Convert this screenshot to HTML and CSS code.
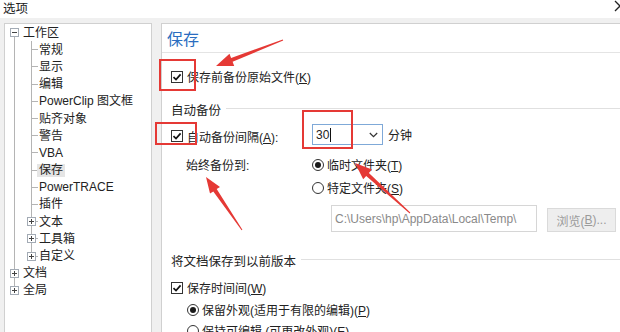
FILE: index.html
```html
<!DOCTYPE html>
<html lang="zh-CN">
<head>
<meta charset="utf-8">
<title>选项</title>
<link rel="stylesheet" href="styles.css">
</head>
<body>
<div class="win">
  <div class="titlebar">
    <span class="title">选项</span>
    <svg class="close" width="12" height="12" viewBox="0 0 12 12"><path d="M1 1 L11 11 M11 1 L1 11" stroke="#222" stroke-width="1.3" fill="none"/></svg>
  </div>
  <div class="body">
    <div class="tree-panel">
      <div class="tree">
        <div class="grp">
          <div class="row top"><span class="exp minus"></span><span class="lbl">工作区</span></div>
          <div class="kids">
            <div class="row kid"><span class="conn"></span><span class="lbl">常规</span></div>
            <div class="row kid"><span class="conn"></span><span class="lbl">显示</span></div>
            <div class="row kid"><span class="conn"></span><span class="lbl">编辑</span></div>
            <div class="row kid"><span class="conn"></span><span class="lbl">PowerClip 图文框</span></div>
            <div class="row kid"><span class="conn"></span><span class="lbl">贴齐对象</span></div>
            <div class="row kid"><span class="conn"></span><span class="lbl">警告</span></div>
            <div class="row kid"><span class="conn"></span><span class="lbl">VBA</span></div>
            <div class="row kid sel"><span class="conn"></span><span class="lbl">保存</span></div>
            <div class="row kid"><span class="conn"></span><span class="lbl">PowerTRACE</span></div>
            <div class="row kid"><span class="conn"></span><span class="lbl">插件</span></div>
            <div class="row kid xkid"><span class="exp plus"></span><span class="conn short"></span><span class="lbl">文本</span></div>
            <div class="row kid xkid"><span class="exp plus"></span><span class="conn short"></span><span class="lbl">工具箱</span></div>
            <div class="row kid xkid"><span class="exp plus"></span><span class="conn short"></span><span class="lbl">自定义</span></div>
          </div>
        </div>
        <div class="row top"><span class="exp plus"></span><span class="lbl">文档</span></div>
        <div class="row top"><span class="exp plus"></span><span class="lbl">全局</span></div>
      </div>
    </div>

    <div class="page">
      <div class="page-head">保存</div>
      <div class="page-body">
        <div class="line cb-row first">
          <span class="cb"><svg width="10" height="10" viewBox="0 0 10 10"><path d="M1.5 5.2 L4 7.6 L8.6 2.4" stroke="#111" stroke-width="1.7" fill="none"/></svg></span>
          <span>保存前备份原始文件(<u>K</u>)</span>
        </div>

        <div class="section s1"><span class="sec-lbl">自动备份</span></div>

        <div class="auto">
          <div class="arow a1">
            <div class="cell">
              <span class="cb"><svg width="10" height="10" viewBox="0 0 10 10"><path d="M1.5 5.2 L4 7.6 L8.6 2.4" stroke="#111" stroke-width="1.7" fill="none"/></svg></span>
              <span>自动备份间隔(<u>A</u>):</span>
            </div>
            <div class="combo"><span class="combo-val">30<span class="caret"></span></span><svg width="9" height="6" viewBox="0 0 9 6"><path d="M0.8 1 L4.5 4.6 L8.2 1" stroke="#333" stroke-width="1.2" fill="none"/></svg></div>
            <span class="unit">分钟</span>
          </div>
          <div class="arow a2">
            <div class="cell indent">始终备份到:</div>
            <span class="radio on"></span><span>临时文件夹(<u>T</u>)</span>
          </div>
          <div class="arow a3">
            <div class="cell"></div>
            <span class="radio"></span><span>特定文件夹(<u>S</u>)</span>
          </div>
          <div class="arow a4">
            <div class="cell"></div>
            <div class="path">C:\Users\hp\AppData\Local\Temp\</div>
            <div class="btn">浏览(<u>B</u>)...</div>
          </div>
        </div>

        <div class="section s2"><span class="sec-lbl">将文档保存到以前版本</span></div>

        <div class="line cb-row c3">
          <span class="cb"><svg width="10" height="10" viewBox="0 0 10 10"><path d="M1.5 5.2 L4 7.6 L8.6 2.4" stroke="#111" stroke-width="1.7" fill="none"/></svg></span>
          <span>保存时间间(<u>W</u>)</span>
        </div>
        <div class="line rad-row r3"><span class="radio on"></span><span>保留外观(适用于有限的编辑)(<u>P</u>)</span></div>
        <div class="line rad-row r4"><span class="radio"></span><span>保持可编辑 (可更改外观)(<u>E</u>)</span></div>
      </div>
    </div>
  </div>

  <svg class="annot" width="620" height="332" viewBox="0 0 620 332">
    <rect x="160" y="60" width="35" height="30" fill="none" stroke="#e53935" stroke-width="2"/>
    <rect x="156" y="123" width="40" height="21" fill="none" stroke="#e53935" stroke-width="2"/>
    <rect x="303" y="111" width="49" height="37" fill="none" stroke="#e53935" stroke-width="2"/>
    <polygon fill="#e53935" points="282.8,39.5 231.1,58.0 229.5,53.8 216,66 234.2,65.9 232.6,61.7 283.2,40.5"/>
    <polygon fill="#e53935" points="410.3,212.6 368.9,173.0 372.0,169.6 355,163 363.2,179.3 366.2,175.9 409.7,213.4"/>
    <polygon fill="#e53935" points="242.4,229.7 216.7,189.1 220.0,186.9 206,177 210.0,193.6 213.3,191.4 241.6,230.3"/>
  </svg>
</div>
</body>
</html>
```

FILE: styles.css
```css
* { box-sizing: border-box; }
html, body { margin: 0; padding: 0; }
body {
  width: 620px;
  height: 332px;
  overflow: hidden;
  background: #f0f0f0;
  font-family: "Liberation Sans", "Noto Sans CJK SC", sans-serif;
  font-size: 12px;
  color: #222;
}
u { text-decoration: underline; text-underline-offset: 1px; }

.win {
  position: relative;
  width: 620px;
  height: 332px;
  display: flex;
  flex-direction: column;
  overflow: hidden;
}

.titlebar {
  height: 18px;
  flex: none;
  background: #fff;
  display: flex;
  align-items: center;
  justify-content: space-between;
  padding-left: 3px;
}
.title { font-size: 12.5px; line-height: 14px; }
.close { margin-right: -6px; margin-top: -6px; }

.body {
  flex: 1;
  display: flex;
  gap: 9px;
  padding: 5px 0 0 4px;
  min-height: 0;
}

/* ---------- tree ---------- */
.tree-panel {
  width: 148px;
  flex: none;
  background: #fff;
  border: 1px solid #d0d0d0;
  border-bottom: 0;
}
.tree {
  background: linear-gradient(#b4b4b4, #b4b4b4) no-repeat 9px 13px / 1px 250px;
}
.row {
  height: 17.2px;
  display: flex;
  align-items: center;
  white-space: nowrap;
}
.row.top { padding-left: 5px; }
.row.top .exp { margin-right: 4px; }
.kids {
  background: linear-gradient(#b4b4b4, #b4b4b4) no-repeat 26px 0 / 1px calc(100% - 13px);
}
.row.kid { padding-left: 27px; }
.row.xkid { padding-left: 22px; }
.conn {
  width: 6px;
  height: 1px;
  background: #b4b4b4;
  margin-right: 1px;
  flex: none;
}
.conn.short { width: 2px; }
.exp {
  width: 9px;
  height: 9px;
  flex: none;
  border: 1px solid #a3abb5;
  background: #fff;
}
.exp.minus {
  background: linear-gradient(#444, #444) center / 5px 1px no-repeat, #fff;
}
.exp.plus {
  background:
    linear-gradient(#444, #444) center / 5px 1px no-repeat,
    linear-gradient(#444, #444) center / 1px 5px no-repeat,
    #fff;
}
.lbl { line-height: 14px; }
.sel .lbl {
  display: inline-block;
  background: #e5e5e5;
  padding: 0 2px;
  margin-left: -2px;
  line-height: 13px;
}

/* ---------- page ---------- */
.page {
  flex: 1;
  background: #fff;
  border: 1px solid #d0d0d0;
  border-right: 0;
  border-bottom: 0;
  display: flex;
  flex-direction: column;
  min-width: 0;
}
.page-head {
  height: 29px;
  flex: none;
  border-bottom: 1px solid #e4e4e4;
  padding-left: 5px;
  display: flex;
  align-items: center;
  color: #2a6dc0;
  font-size: 16px;
  font-family: "Noto Sans CJK SC", sans-serif;
}
.page-body { padding-left: 9px; }

.line {
  height: 17px;
  display: flex;
  align-items: center;
  white-space: nowrap;
}
.cb {
  width: 12px;
  height: 12px;
  flex: none;
  border: 1px solid #333;
  background: #fff;
  display: flex;
  align-items: center;
  justify-content: center;
  margin-right: 4px;
}
.radio {
  width: 12px;
  height: 12px;
  flex: none;
  border: 1px solid #333;
  border-radius: 50%;
  background: #fff;
  margin-right: 3px;
  display: flex;
  align-items: center;
  justify-content: center;
}
.radio.on::before {
  content: "";
  width: 6px;
  height: 6px;
  border-radius: 50%;
  background: #1a1a1a;
}

.first { margin-top: 15px; }

.section {
  height: 17px;
  display: flex;
  align-items: center;
  gap: 5px;
  white-space: nowrap;
}
.section::after {
  content: "";
  flex: 1;
  height: 1px;
  background: #e0e0e0;
  margin-top: -2px;
}
.sec-lbl { font-size: 12.5px; }
.s1 { margin-top: 16px; }
.s2 { margin-top: 20px; }

.auto { display: flex; flex-direction: column; }
.arow {
  display: flex;
  align-items: center;
  white-space: nowrap;
}
.cell {
  width: 141px;
  flex: none;
  display: flex;
  align-items: center;
}
.cell.indent { padding-left: 15px; }
.a1 { margin-top: 6px; height: 21px; }
.a1 .cell { padding-top: 3px; }
.a2 { margin-top: 11px; height: 17px; }
.a3 { margin-top: 6px; height: 17px; }
.a4 { margin-top: 9px; height: 27px; align-items: flex-end; }

.combo {
  width: 71px;
  height: 21px;
  border: 1px solid #7fa9d8;
  display: flex;
  align-items: center;
  justify-content: space-between;
  padding: 0 4px 0 3px;
}
.combo-val { display: flex; align-items: center; }
.caret {
  width: 1px;
  height: 14px;
  background: #111;
  margin-left: 1px;
}
.unit { margin-left: 5px; }

.path {
  margin-left: 19px;
  width: 206px;
  height: 27px;
  border: 1px solid #d6d6d6;
  background: #fff;
  color: #8a8a8a;
  display: flex;
  align-items: center;
  padding-left: 3px;
}
.btn {
  margin-left: 10px;
  width: 69px;
  height: 24px;
  border: 1px solid #dadada;
  background: #eeeeee;
  color: #9a9a9a;
  display: flex;
  align-items: center;
  justify-content: center;
}

.c3 { margin-top: 10px; }
.rad-row { padding-left: 16px; }
.r3 { margin-top: 5px; }
.r4 { margin-top: 4px; }

.annot {
  position: absolute;
  top: 0;
  left: 0;
  pointer-events: none;
}
```
